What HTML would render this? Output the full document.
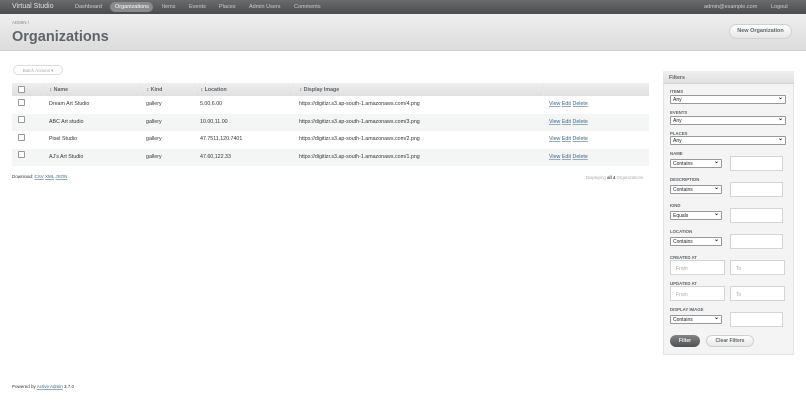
<!DOCTYPE html>
<html><head><style>
*{box-sizing:border-box}
body{margin:0;width:806px;height:414px;background:#fff;font-family:"Liberation Sans",sans-serif;color:#323537;position:relative;overflow:hidden;font-size:5px}
.a{position:absolute}
#hd{left:0;top:0;width:806px;height:14px;background:linear-gradient(#6a6b6c,#4b4c4d);}
#hd span{position:absolute;top:4px;color:#cdcdcd;font-size:5.5px}
#tb{left:0;top:14px;width:806px;height:37px;background:linear-gradient(#efefef,#dcdcdc);border-bottom:1px solid #cdcdcd}
table{border-collapse:collapse;position:absolute;left:12px;top:83px;width:637px;font-size:5.3px}
th{background:linear-gradient(#efefef,#e0e0e0);height:13px;text-align:left;font-weight:bold;color:#5e6469;padding:0 0 0 6px;border-right:1px solid #e8e8e8}
td{height:17.5px;padding:0 0 1px 6px;color:#323537}
tr.e td{background:#f4f5f5}
.cb{width:7px;height:7px;border:1px solid #999;border-radius:1px;display:inline-block;background:#fff;vertical-align:middle}
td .cb{position:relative;top:-2px}
a{color:#38678b;text-decoration:underline;text-decoration-color:#9ab}
.lbl{position:absolute;left:670px;font-size:4.3px;font-weight:bold;color:#5e6469}
.sel{position:absolute;left:670px;height:9px;border:1px solid #999;background:#fff;font-size:5px;padding:1px 0 0 2px;color:#222;border-radius:1px}
.sel:after{content:"⌄";position:absolute;right:2px;top:-2px;font-size:6px;font-weight:bold}
.inp{position:absolute;height:15px;border:1px solid #d4d4d4;background:#fff;font-size:5px;color:#aaa;padding:5px 0 0 5px}
</style></head><body>
<div id="hd" class="a">
<span style="left:12px;top:3px;font-size:7px;color:#e0e0e0">Virtual Studio</span>
<span style="left:75px">Dashboard</span>
<span style="left:110px;top:2px;height:10px;width:43px;background:#8a8b8c;border-radius:5px;padding:2px 0 0 5px;color:#fff">Organizations</span>
<span style="left:162px">Items</span>
<span style="left:189px">Events</span>
<span style="left:219px">Places</span>
<span style="left:249px">Admin Users</span>
<span style="left:294px">Comments</span>
<span style="left:704px">admin@example.com</span>
<span style="left:771px">Logout</span>
</div>
<div id="tb" class="a">
<div class="a" style="left:12px;top:6px;font-size:4.5px;color:#8a8a8a">ADMIN /</div>
<div class="a" style="left:12px;top:15px;font-size:14.5px;font-weight:bold;color:#5e6469">Organizations</div>
<div class="a" style="left:729px;top:10px;width:63px;height:15px;border-radius:8px;background:linear-gradient(#fff,#e6e6e6);border:1px solid #d0d0d0;font-size:5.5px;font-weight:bold;color:#5e6469;text-align:center;line-height:13px">New Organization</div>
</div>
<div class="a" style="left:13px;top:65px;width:50px;height:10px;border:1px solid #ddd;border-radius:5px;font-size:4.5px;color:#aaa;text-align:center;line-height:9px">Batch Actions ▾</div>
<table>
<tr><th style="width:31px"><span class="cb"></span></th><th style="width:97px">↕ Name</th><th style="width:54px">↕ Kind</th><th style="width:99px">↕ Location</th><th style="width:250px">↕ Display Image</th><th style="border:0"></th></tr>
<tr><td><span class="cb"></span></td><td>Dream Art Studio</td><td>gallery</td><td>5.00,6.00</td><td>https://digitizr.s3.ap-south-1.amazonaws.com/4.png</td><td><a>View</a> <a>Edit</a> <a>Delete</a></td></tr>
<tr class="e"><td><span class="cb"></span></td><td>ABC Art studio</td><td>gallery</td><td>10.00,11.00</td><td>https://digitizr.s3.ap-south-1.amazonaws.com/3.png</td><td><a>View</a> <a>Edit</a> <a>Delete</a></td></tr>
<tr><td><span class="cb"></span></td><td>Pixel Studio</td><td>gallery</td><td>47.7511,120.7401</td><td>https://digitizr.s3.ap-south-1.amazonaws.com/2.png</td><td><a>View</a> <a>Edit</a> <a>Delete</a></td></tr>
<tr class="e"><td><span class="cb"></span></td><td>AJ's Art Studio</td><td>gallery</td><td>47.60,122.33</td><td>https://digitizr.s3.ap-south-1.amazonaws.com/1.png</td><td><a>View</a> <a>Edit</a> <a>Delete</a></td></tr>
</table>
<div class="a" style="left:12px;top:174px;font-size:4.5px">Download: <a>CSV</a> <a>XML</a> <a>JSON</a></div>
<div class="a" style="left:586px;top:175px;font-size:4.3px;color:#aaa">Displaying <b style="color:#555">all 4</b> Organizations</div>
<div class="a" style="left:12px;top:384px;font-size:4.5px">Powered by <a>Active Admin</a> 3.7.0</div>
<div class="a" style="left:663px;top:71px;width:131px;height:284px;background:#f4f4f4;border:1px solid #e4e4e4"></div>
<div class="a" style="left:663px;top:71px;width:131px;height:13px;background:linear-gradient(#f0f0f0,#e0e0e0);border-bottom:1px solid #d4d4d4;font-size:5.3px;font-weight:bold;color:#5e6469;padding:4px 0 0 6px">Filters</div>
<div class="lbl" style="top:89px">ITEMS</div><div class="sel" style="top:95px;width:116px">Any</div>
<div class="lbl" style="top:110px">EVENTS</div><div class="sel" style="top:116px;width:116px">Any</div>
<div class="lbl" style="top:131px">PLACES</div><div class="sel" style="top:136px;width:116px">Any</div>
<div class="lbl" style="top:151px">NAME</div><div class="sel" style="top:159px;width:52px">Contains</div><div class="inp" style="left:730px;top:156px;width:53px"></div>
<div class="lbl" style="top:177px">DESCRIPTION</div><div class="sel" style="top:185px;width:52px">Contains</div><div class="inp" style="left:730px;top:182px;width:53px"></div>
<div class="lbl" style="top:203px">KIND</div><div class="sel" style="top:211px;width:52px">Equals</div><div class="inp" style="left:730px;top:208px;width:53px"></div>
<div class="lbl" style="top:229px">LOCATION</div><div class="sel" style="top:237px;width:52px">Contains</div><div class="inp" style="left:730px;top:234px;width:53px"></div>
<div class="lbl" style="top:255px">CREATED AT</div><div class="inp" style="left:670px;top:260px;width:55px">From</div><div class="inp" style="left:730px;top:260px;width:55px">To</div>
<div class="lbl" style="top:281px">UPDATED AT</div><div class="inp" style="left:670px;top:286px;width:55px">From</div><div class="inp" style="left:730px;top:286px;width:55px">To</div>
<div class="lbl" style="top:307px">DISPLAY IMAGE</div><div class="sel" style="top:315px;width:52px">Contains</div><div class="inp" style="left:730px;top:312px;width:53px"></div>
<div class="a" style="left:670px;top:335px;width:30px;height:12px;border-radius:6px;background:linear-gradient(#838485,#505152);color:#eee;font-size:5px;font-weight:bold;text-align:center;line-height:12px">Filter</div>
<div class="a" style="left:706px;top:335px;width:48px;height:12px;border-radius:6px;background:linear-gradient(#fff,#e8e8e8);border:1px solid #d0d0d0;color:#5e6469;font-size:5px;font-weight:bold;text-align:center;line-height:10px">Clear Filters</div>
</body></html>
